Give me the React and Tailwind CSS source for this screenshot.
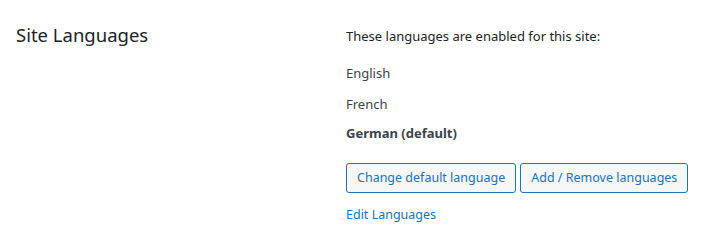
export default function App() {
  const languages = ['English', 'French']

  return (
    <div className="w-[717px] h-[249px] bg-white flex text-[13px] text-[#3c434a]" style={{ fontFamily: '"Noto Sans", "Open Sans", sans-serif' }}>
      <div className="w-[346px] pl-4 pt-5">
        <h2 className="text-[18.5px] leading-[30px] text-[#1d2327] font-normal">Site Languages</h2>
      </div>

      <div className="pt-[26px]">
        <p className="leading-5 text-[#1d2327]">These languages are enabled for this site:</p>

        <p className="leading-5 mt-[17px]">{languages[0]}</p>
        <p className="leading-5 mt-[11px]">{languages[1]}</p>
        <p className="leading-5 mt-[9px] font-bold">German (default)</p>

        <div className="flex gap-1 mt-5">
          <button className="h-[30px] px-[10px] rounded-[3px] border border-[#2271b1] bg-[#f6f7f7] text-[#2271b1] text-[12.5px] leading-[28px]">
            Change default language
          </button>
          <button className="h-[30px] px-[10px] rounded-[3px] border border-[#2271b1] bg-[#f6f7f7] text-[#2271b1] text-[12.5px] leading-[28px]">
            Add / Remove languages
          </button>
        </div>

        <a href="#" className="block leading-5 mt-3 text-[#2271b1] text-[12.5px]">Edit Languages</a>
      </div>
    </div>
  )
}
